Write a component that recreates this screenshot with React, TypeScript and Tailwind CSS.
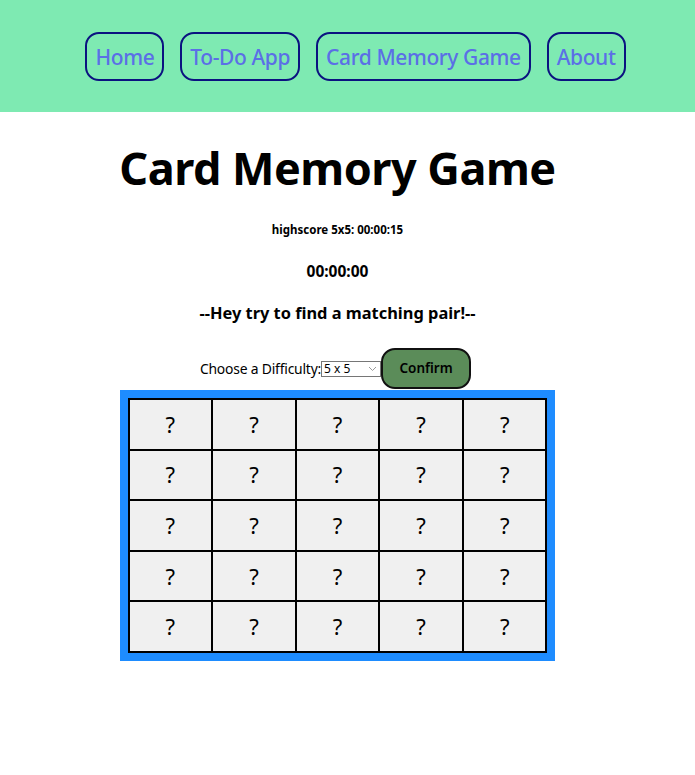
import React, { useState } from "react";

const NAV = ["Home", "To-Do App", "Card Memory Game", "About"];

export default function App() {
  const [size, setSize] = useState("5");
  const n = Number(size);
  const cells = Array.from({ length: n * n });

  return (
    <div className="min-h-[775px] bg-white text-black" style={{ fontFamily: '"Noto Sans", "Open Sans", sans-serif' }}>
      <nav className="h-[112px] bg-[#7eeab2] flex items-center justify-center gap-[16px] pl-[16px]">
        {NAV.map((item) => (
          <a
            key={item}
            href="#"
            className="h-[49px] px-[8px] pt-[3px] flex items-center border-2 border-[#0b1280] rounded-[14px] text-[21px] font-medium text-[#5b6fe6] tracking-[-0.4px]"
          >
            {item}
          </a>
        ))}
      </nav>

      <main className="flex flex-col items-center pr-[20px]">
        <h1 className="mt-[28px] text-[45px] leading-[56px] font-bold tracking-[-0.5px]">Card Memory Game</h1>
        <p className="mt-[26px] text-[11.5px] leading-[16px] font-bold">highscore 5x5: 00:00:15</p>
        <p className="mt-[23px] text-[15.5px] leading-[20px] font-bold">00:00:00</p>
        <p className="mt-[21px] text-[16.4px] leading-[22px] font-bold">--Hey try to find a matching pair!--</p>

        <div className="mt-[24px] mr-[4px] flex items-center">
          <label className="text-[13.9px] tracking-[-0.2px] mt-[1px]">Choose a Difficulty:</label>
          <div className="relative">
            <select
              value={size}
              onChange={(e) => setSize(e.target.value)}
              className="appearance-none block w-[60px] h-[16px] border border-[#767676] text-[12px] leading-[14px] pl-[2px] bg-white"
            >
              <option value="3">3 x 3</option>
              <option value="4">4 x 4</option>
              <option value="5">5 x 5</option>
            </select>
            <svg className="absolute right-[4px] top-[5px] pointer-events-none" width="9" height="6" viewBox="0 0 9 6">
              <path d="M1 1l3.5 3.5L8 1" fill="none" stroke="#9a9a9a" strokeWidth="1" />
            </svg>
          </div>
          <button className="w-[90px] h-[41px] bg-[#5b8c59] border-2 border-[#111] rounded-[14px] text-[13.5px] font-semibold">
            Confirm
          </button>
        </div>

        <div className="mt-[1px] border-8 border-[#1e8cff]">
          <div
            className="grid border border-black"
            style={{ gridTemplateColumns: `repeat(${n}, 83.6px)` }}
          >
            {cells.map((_, i) => (
              <div
                key={i}
                className="h-[50.6px] bg-[#f0f0f0] border border-black flex items-center justify-center text-[22px]"
              >
                ?
              </div>
            ))}
          </div>
        </div>
      </main>
    </div>
  );
}
